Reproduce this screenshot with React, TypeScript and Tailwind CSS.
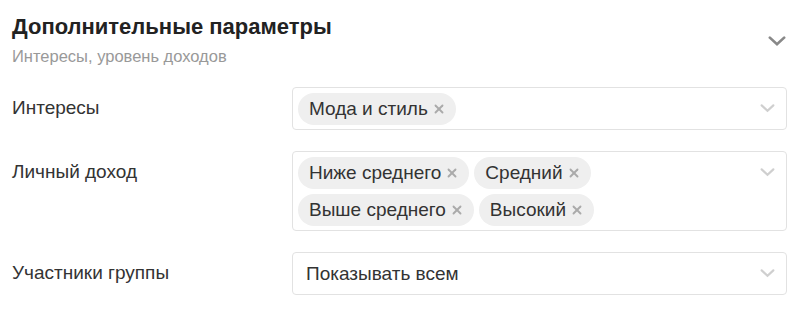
import { X } from "lucide-react";

function Chevron({ className }: { className?: string }) {
  return (
    <svg viewBox="0 0 16 10" className={className} fill="none">
      <path d="M1.5 1.5 L8 7.5 L14.5 1.5" stroke="currentColor" strokeWidth="2.4" strokeLinecap="round" />
    </svg>
  );
}

function Chip({ label }: { label: string }) {
  return (
    <span className="inline-flex h-8 items-center gap-[4px] rounded-full bg-[#efefef] pl-[11px] pr-[10px] text-[19px] text-[#333]">
      {label}
      <X className="h-[14px] w-[14px] text-[#aaa]" strokeWidth={3.2} />
    </span>
  );
}

function Field({ label, children }: { label: string; children: React.ReactNode }) {
  return (
    <div className="flex items-start">
      <div className="w-[280px] shrink-0 pt-[9px] text-[19px] leading-[24px] text-[#333]">{label}</div>
      <div className="flex min-h-[43px] flex-1 items-start rounded border border-[#e2e2e2] bg-white px-[5px] pb-[4px] pt-[5px]">
        <div className="flex flex-1 flex-wrap gap-[5px]">{children}</div>
        <Chevron className="mr-[6px] mt-[11px] h-[9px] w-[15px] text-[#cfcfcf]" />
      </div>
    </div>
  );
}

export default function App() {
  return (
    <div className="min-h-[309px] bg-white pl-3 pr-[21px] pt-[13px]" style={{ fontFamily: '"Liberation Sans", Arial, sans-serif' }}>
      <div className="flex items-start justify-between">
        <div>
          <h2 className="text-[22px] font-bold leading-[28px] text-[#222]">Дополнительные параметры</h2>
          <p className="mt-[5px] text-[16.5px] leading-[20px] text-[#999]">Интересы, уровень доходов</p>
        </div>
        <Chevron className="mr-[1px] mt-[23px] h-[11px] w-[18px] text-[#888]" />
      </div>
      <div className="mt-[21px] flex flex-col gap-[21px]">
        <Field label="Интересы">
          <Chip label="Мода и стиль" />
        </Field>
        <Field label="Личный доход">
          <Chip label="Ниже среднего" />
          <Chip label="Средний" />
          <Chip label="Выше среднего" />
          <Chip label="Высокий" />
        </Field>
        <Field label="Участники группы">
          <span className="flex h-8 items-center pl-2 text-[19px] text-[#333]">Показывать всем</span>
        </Field>
      </div>
    </div>
  );
}
